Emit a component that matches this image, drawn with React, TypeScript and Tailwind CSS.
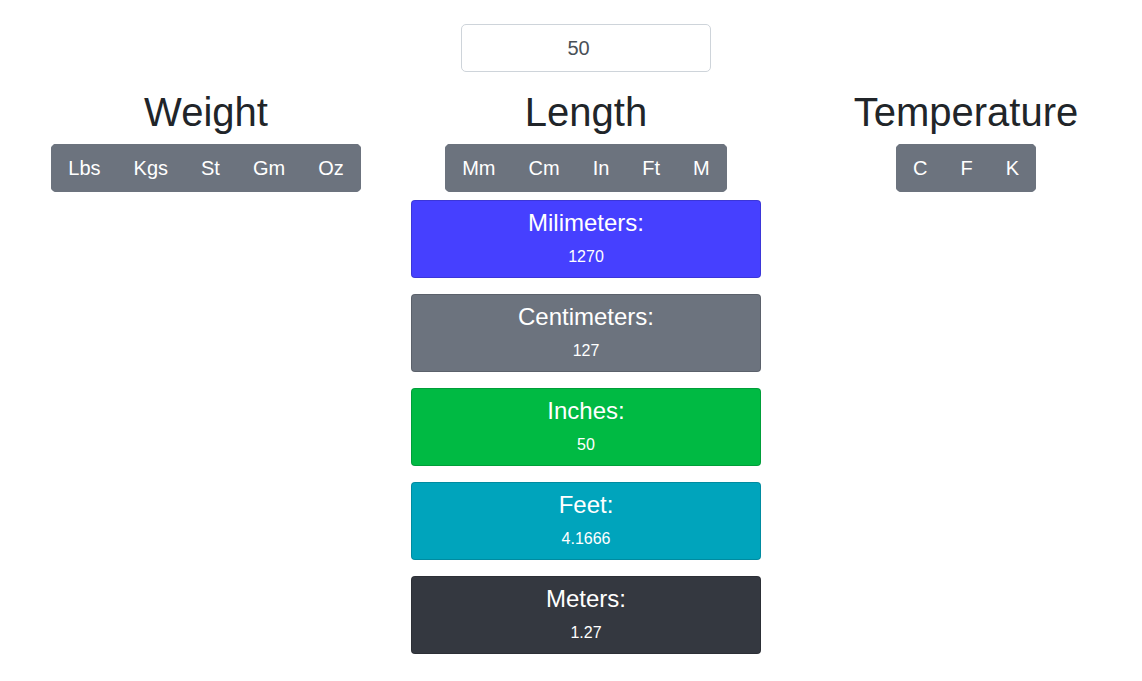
import { useState } from "react";

type Unit = { label: string; name: string };

const groups: { title: string; units: Unit[] }[] = [
  {
    title: "Weight",
    units: [
      { label: "Lbs", name: "Pounds" },
      { label: "Kgs", name: "Kilograms" },
      { label: "St", name: "Stone" },
      { label: "Gm", name: "Grams" },
      { label: "Oz", name: "Ounces" },
    ],
  },
  {
    title: "Length",
    units: [
      { label: "Mm", name: "Millimeters" },
      { label: "Cm", name: "Centimeters" },
      { label: "In", name: "Inches" },
      { label: "Ft", name: "Feet" },
      { label: "M", name: "Meters" },
    ],
  },
  {
    title: "Temperature",
    units: [
      { label: "C", name: "Celsius" },
      { label: "F", name: "Fahrenheit" },
      { label: "K", name: "Kelvin" },
    ],
  },
];

const results = [
  { title: "Milimeters:", value: "1270", color: "bg-[#4640ff]" },
  { title: "Centimeters:", value: "127", color: "bg-[#6c737e]" },
  { title: "Inches:", value: "50", color: "bg-[#00ba43]" },
  { title: "Feet:", value: "4.1666", color: "bg-[#00a4bc]" },
  { title: "Meters:", value: "1.27", color: "bg-[#343840]" },
];

function ResultCard({ title, value, color }: { title: string; value: string; color: string }) {
  return (
    <div className={`rounded border border-black/15 px-5 py-2 text-center text-white ${color}`}>
      <h2 className="mb-2 text-2xl leading-7">{title}</h2>
      <p className="text-base leading-6">{value}</p>
    </div>
  );
}

export default function App() {
  const [amount, setAmount] = useState("50");

  return (
    <main className="py-6 pr-px pl-[31px] font-['Liberation_Sans',Arial,sans-serif] text-[#212529]">
      <div className="flex justify-center">
        <input
          type="number"
          aria-label="Value to convert"
          value={amount}
          onChange={(e) => setAmount(e.target.value)}
          className="h-12 w-[250px] rounded-[5px] border border-[#ced4da] bg-white px-4 text-center text-xl text-[#495057]"
        />
      </div>
      <div className="mt-4 grid grid-cols-3 items-start gap-[30px]">
        {groups.map((group) => (
          <section key={group.title} className="flex flex-col items-center">
            <h1 className="mb-2 text-[40px] leading-12">{group.title}</h1>
            <div
              className="flex -space-x-px overflow-hidden rounded-[5px] bg-[#6c737e]"
              role="group"
              aria-label={group.title}
            >
              {group.units.map((unit) => (
                <button
                  key={unit.label}
                  type="button"
                  title={unit.name}
                  className="h-12 border border-[#6c737e] px-4 text-xl text-white"
                >
                  {unit.label}
                </button>
              ))}
            </div>
            {group.title === "Length" && (
              <div className="mt-2 flex w-full flex-col gap-4">
                {results.map((result) => (
                  <ResultCard key={result.title} {...result} />
                ))}
              </div>
            )}
          </section>
        ))}
      </div>
    </main>
  );
}
